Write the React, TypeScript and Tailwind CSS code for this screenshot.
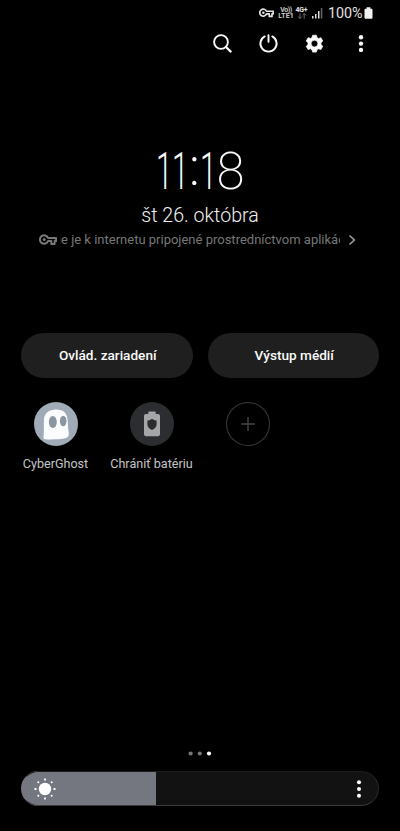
import { useState } from "react";
import type { ReactNode } from "react";

type Tile = {
  id: string;
  label: string;
  circle: string;
  icon: ReactNode;
};

function KeyIcon({ className }: { className: string }) {
  return (
    <svg viewBox="0 0 18 12" className={className} fill="none" stroke="currentColor">
      <path
        d="M9 3.900H17.100v3.200h-1.500v3h-3.300v-3H9A4.200 4.200 0 1 1 9 3.900Z"
        strokeWidth="2"
        strokeLinejoin="round"
      />
      <circle cx="5.200" cy="5.600" r="1.500" fill="currentColor" stroke="none" />
    </svg>
  );
}

function GhostIcon() {
  return (
    <svg viewBox="0 0 44 44" className="size-11">
      <path
        d="M10.800 37.200C9.700 37.100 9.300 36.300 9.500 35.100c.7-4.500.3-9.100.4-17C10.100 12.100 14 8.200 21 7.600c8.200-.5 12 3.300 12.600 10.400.3 4 .4 8.700 1.200 12.800.5 2.700-.7 4.700-3.500 5.400-5 1.200-14.500 1.400-20.500 1Z"
        fill="#fbfcfd"
      />
      <ellipse cx="18.800" cy="19.900" rx="4" ry="6" fill="#8c96a2" />
      <ellipse cx="29.200" cy="19" rx="3.300" ry="5.200" fill="#8c96a2" />
    </svg>
  );
}

function BatteryShieldIcon() {
  return (
    <svg viewBox="0 0 44 44" className="size-11">
      <path
        d="M18.300 10.200c0-.5.400-.8.800-.8h5.800c.5 0 .8.300.8.800V12h2.400c1.100 0 1.900.8 1.900 1.900v18.400c0 1.100-.8 1.900-1.900 1.900H15.900c-1.100 0-1.900-.8-1.900-1.900V13.900c0-1.100.8-1.900 1.900-1.900h2.400Z"
        fill="#a5a6a8"
      />
      <path
        d="M22 16.800c1.500 1.200 3 1.700 4.600 1.800v3.600c0 2.700-1.900 4.700-4.600 5.900-2.700-1.200-4.600-3.200-4.600-5.900v-3.600c1.600-.1 3.100-.6 4.600-1.800Z"
        fill="#2b2d31"
      />
    </svg>
  );
}

function PlusIcon() {
  return (
    <svg viewBox="0 0 44 44" className="size-11" stroke="#444444" strokeWidth="1.400">
      <path d="M15 22h14M22 15v14" />
    </svg>
  );
}

const TILES: Tile[] = [
  { id: "vpn", label: "CyberGhost", circle: "bg-[#a0abb7]", icon: <GhostIcon /> },
  { id: "battery", label: "Chrániť batériu", circle: "bg-[#2b2d31]", icon: <BatteryShieldIcon /> },
  { id: "add", label: "", circle: "ring-1 ring-inset ring-[#3a3a3a]", icon: <PlusIcon /> },
];

function StatusBar() {
  return (
    <div className="flex h-[26px] items-center pl-[259px] text-[#e4e4e4]">
      <KeyIcon className="h-[10px] w-[15px]" />
      <div className="ml-1 flex w-4 flex-col items-center text-[7px] leading-[6.500px] font-bold text-[#c8c8c8]">
        <span className="flex items-center tracking-[-0.4px]">Vo))</span>
        <span>LTE1</span>
      </div>
      <div className="ml-[1px] flex w-[13px] flex-col items-center text-[7px] leading-[6px] font-bold tracking-[-0.2px]">
        <span>4G+</span>
        <svg viewBox="0 0 10 6" className="h-[6px] w-[10px]" fill="none" stroke="#777777" strokeWidth="0.900">
          <path d="M3 .4v5M1 3.500l2 2 2-2M7.200 5.600v-5M5.400 2.400l1.800-1.900L9 2.400" />
        </svg>
      </div>
      <svg viewBox="0 0 11 12" className="ml-[4px] h-3 w-[11px]">
        <path d="M0 9h1.500v2.500H0zM3 7h1.500v4.500H3zM6 4h1.500v7.500H6z" fill="#dddddd" />
        <path d="M8.800 1h1.500v10.500H8.800z" fill="#666666" />
      </svg>
      <span className="ml-[5px] w-[35px] text-[14.300px] leading-none whitespace-nowrap">100%</span>
      <svg viewBox="0 0 9 12" className="ml-[1px] h-3 w-[9px]" fill="#f2f2f2">
        <path d="M2.600.3h3.800v1.500h.8c.8 0 1.300.5 1.300 1.300v7.300c0 .8-.5 1.300-1.300 1.300H1.800c-.8 0-1.300-.5-1.300-1.300V3.100c0-.8.5-1.300 1.300-1.300h.8Z" />
      </svg>
    </div>
  );
}

function Toolbar() {
  return (
    <div className="flex h-[35px] items-center gap-[22px] pl-[210px] text-[#fafafa]">
      <button aria-label="Hľadať">
        <svg viewBox="0 0 24 24" className="block size-6" fill="none" stroke="currentColor" strokeWidth="1.900">
          <circle cx="11" cy="10" r="6.900" />
          <path d="m16 15 4.700 4.600" strokeWidth="2.200" strokeLinecap="round" />
        </svg>
      </button>
      <button aria-label="Vypnúť">
        <svg viewBox="0 0 24 24" className="block size-6" fill="none" stroke="currentColor" strokeWidth="1.900" strokeLinecap="round">
          <path d="M8.700 4.400A8.100 8.100 0 1 0 16.300 4.400M12.500 3.200v6.600" />
        </svg>
      </button>
      <button aria-label="Nastavenia">
        <svg viewBox="0 0 24 24" className="block size-6" fill="currentColor" stroke="currentColor" strokeWidth="0.700" strokeLinejoin="round">
          <path
            fillRule="evenodd"
            d="M10.600 3.200h3.800l.6 2.400 1.500.9 2.400-.8 1.900 3.300-1.800 1.700v1.900l1.800 1.700-1.900 3.300-2.400-.8-1.500.9-.6 2.400h-3.800l-.6-2.400-1.500-.9-2.400.8-1.900-3.300L6 12.600v-1.900L4.200 9l1.900-3.300 2.400.8 1.500-.9ZM12.500 8.200a3.400 3.400 0 1 0 0 6.800 3.400 3.400 0 0 0 0-6.800Z"
          />
        </svg>
      </button>
      <button aria-label="Viac">
        <svg viewBox="0 0 24 24" className="block size-6" fill="currentColor">
          <circle cx="13" cy="5.300" r="2.200" />
          <circle cx="13" cy="11.600" r="2.200" />
          <circle cx="13" cy="17.900" r="2.200" />
        </svg>
      </button>
    </div>
  );
}

// the clock face uses a narrow "1"
function One({ className }: { className: string }) {
  return (
    <span className={className}>
      <span className="inline-block origin-left scale-x-58 font-light">1</span>
    </span>
  );
}

function Clock() {
  return (
    <div className="flex h-[272px] flex-col items-center pt-[86px]">
      <div className="flex h-[50px] text-[51px] leading-[50px] font-extralight text-[#f8f8f8]">
        <One className="ml-px w-4" />
        <One className="w-[16.800px]" />
        <span className="-mt-[4px] w-[10.700px] font-light">:</span>
        <One className="w-[16.800px]" />
        <span>8</span>
      </div>
      <div className="mt-[7px] h-6 text-[19.600px] leading-6 font-light text-[#f2f2f2]">št 26. októbra</div>
      <div className="mt-[2px] flex h-5 w-full items-center pl-[39px] text-[#777777]">
        <KeyIcon className="h-3 w-[18px]" />
        <div className="ml-[3px] flex w-[280px] justify-end overflow-hidden text-[13px] leading-5 whitespace-nowrap">
          <span className="-mr-[5px]">ie je k internetu pripojené prostredníctvom aplikác</span>
        </div>
        <svg viewBox="0 0 8 12" className="ml-[8px] h-3 w-2" fill="none" stroke="#999999" strokeWidth="1.700">
          <path d="m1.500 1.500 4.800 4.500-4.800 4.500" />
        </svg>
      </div>
    </div>
  );
}

export default function App() {
  const [brightness] = useState(37.7);
  const [page] = useState(2);

  return (
    <div className="flex h-[831px] w-[400px] flex-col overflow-hidden bg-black font-[Roboto,sans-serif] text-white">
      <StatusBar />
      <Toolbar />
      <Clock />

      <div className="grid h-[45px] grid-cols-2 gap-[15px] px-[21px] text-[13.600px] font-medium text-[#fafafa]">
        <button className="rounded-full bg-[#1f1f1f] pl-[2px]">Ovlád. zariadení</button>
        <button className="rounded-full bg-[#1f1f1f] pl-[2px]">Výstup médií</button>
      </div>

      <div className="mt-[24px] grid grid-cols-[96px_96px_96px] pl-[7.500px]">
        {TILES.map((tile) => (
          <div key={tile.id} className="flex flex-col items-center">
            <div className={`size-11 overflow-hidden rounded-full ${tile.circle}`}>{tile.icon}</div>
            <span className="mt-[10px] text-[12.600px] leading-4 whitespace-nowrap text-[#c4c4c4]">{tile.label}</span>
          </div>
        ))}
      </div>

      <svg viewBox="0 0 24 6" className="mx-auto mt-auto h-[6px] w-6">
        {[0, 1, 2].map((i) => (
          <circle key={i} cx={2.600 + i * 9.200} cy="2.500" r="2.100" fill={i === page ? "#ffffff" : "#777777"} />
        ))}
      </svg>

      <div className="relative mx-[21px] mt-[14px] mb-[25px] flex h-[35px] shrink-0 items-center justify-between overflow-hidden rounded-full bg-[#121212] pr-[15px] pl-[12px]">
        <div className="absolute inset-y-0 left-0 bg-[#747780]" style={{ width: `${brightness}%` }} />
        <svg viewBox="0 0 24 24" className="relative size-6" fill="white">
          <circle cx="12" cy="12" r="6.200" />
          <path
            d="M12 1.500v2M12 20.500v2M1.500 12h2M20.500 12h2M4.700 4.700l1.200 1.200M18.100 18.100l1.200 1.200M4.700 19.300l1.200-1.200M18.100 5.900l1.200-1.200"
            stroke="white"
            strokeWidth="1.800"
          />
        </svg>
        <svg viewBox="0 0 10 20" className="relative h-5 w-[10px]" fill="white">
          <circle cx="5" cy="3.300" r="2" />
          <circle cx="5" cy="10" r="2" />
          <circle cx="5" cy="16.700" r="2" />
        </svg>
        <div className="absolute inset-0 rounded-full border border-t-[#1c1c1c] border-r-[#2a2a2a] border-b-[#3a3a3a] border-l-transparent" />
      </div>
    </div>
  );
}
